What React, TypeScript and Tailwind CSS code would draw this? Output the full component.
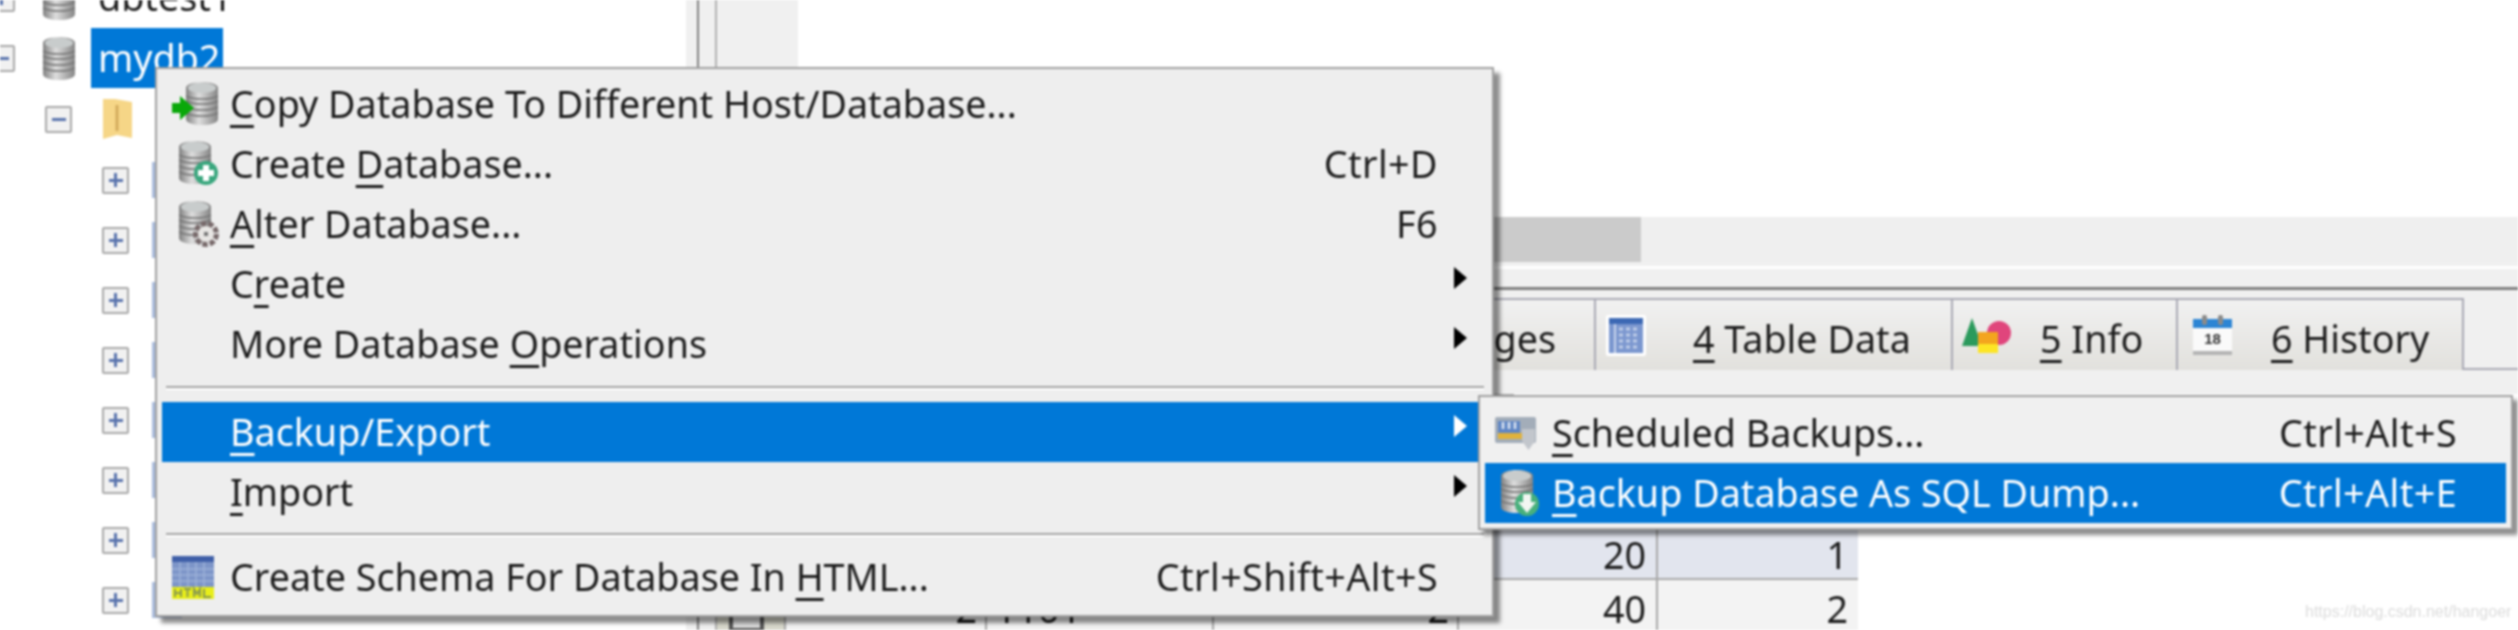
import { ReactNode } from "react";

type MenuEntry = {
  label: string;
  mnemonic: number;
  shortcut?: string;
  submenu?: boolean;
  active?: boolean;
  icon?: ReactNode;
};

// text with one underlined access key, windows menu style
function Label({ text, at }: { text: string; at: number }) {
  return (
    <span className="whitespace-pre">
      {text.slice(0, at)}
      <span className="underline decoration-[3px] underline-offset-[7px] [text-decoration-skip-ink:none]">{text[at]}</span>
      {text.slice(at + 1)}
    </span>
  );
}

function Cylinder({ id }: { id: string }) {
  return (
    <>
      <defs>
        <linearGradient id={id} x1="0" x2="1" y1="0" y2="0">
          <stop offset="0" stopColor="#808080" />
          <stop offset="0.4" stopColor="#dedede" />
          <stop offset="1" stopColor="#858585" />
        </linearGradient>
      </defs>
      <path d="M1 7C1 -1 33 -1 33 7V38C33 46 1 46 1 38Z" fill={`url(#${id})`} />
      <ellipse cx="17" cy="7" rx="14" ry="5" fill="#c8cccc" />
      <path d="M1 15C8 19 26 19 33 15M1 20C8 24 26 24 33 20M1 26C8 30 26 30 33 26M1 32C8 36 26 36 33 32" stroke="#777" strokeWidth="1.5" fill="none" />
    </>
  );
}

function DbIcon({ id, className }: { id: string; className?: string }) {
  return (
    <svg viewBox="0 0 34 45" className={className}>
      <Cylinder id={id} />
    </svg>
  );
}

function CopyDbIcon() {
  return (
    <svg viewBox="0 0 48 46" className="w-[48px] h-[46px]">
      <g transform="translate(13 0)">
        <Cylinder id="db-copy" />
      </g>
      <path d="M0 22H8V15L22 27L8 39V32H0Z" fill="#0aa80a" />
    </svg>
  );
}

function CreateDbIcon() {
  return (
    <svg viewBox="0 0 42 48" className="w-[42px] h-[48px]">
      <Cylinder id="db-create" />
      <circle cx="28" cy="33" r="12" fill="#3aa77e" />
      <path d="M28 25V41M20 33H36" stroke="#fff" strokeWidth="6" />
    </svg>
  );
}

function AlterDbIcon() {
  return (
    <svg viewBox="0 0 42 48" className="w-[42px] h-[48px]">
      <Cylinder id="db-alter" />
      <circle cx="28" cy="34" r="10" fill="none" stroke="#77696a" strokeWidth="6" strokeDasharray="5 2" />
      <circle cx="28" cy="34" r="8" fill="#e7e5e3" />
      <rect x="26" y="32" width="4" height="4" fill="#777" />
    </svg>
  );
}

function HtmlGridIcon() {
  return (
    <svg viewBox="0 0 42 43" className="w-[42px] h-[43px]">
      <rect width="42" height="43" fill="#7d95c8" />
      <rect width="42" height="6" fill="#3f5fa8" />
      <path d="M0 13H42M0 19H42M0 25H42M8 6V31M16 6V31M24 6V31M32 6V31" stroke="#9cb0d8" strokeWidth="1.5" />
      <rect y="31" width="42" height="12" fill="#e8ee1a" />
      <path d="M3 33V41M9 33V41M3 37H9M12 33H19M15.5 33V41M22 41V33L25 38L28 33V41M32 33V41H39" stroke="#8a9a50" strokeWidth="2" fill="none" />
    </svg>
  );
}

function ScheduleIcon() {
  return (
    <svg viewBox="0 0 41 33" className="w-[41px] h-[33px]">
      <rect width="41" height="26" rx="2" fill="#a3adb9" />
      <rect x="3" y="4" width="22" height="18" fill="#5f86c4" />
      <rect x="3" y="16" width="26" height="6" fill="#e0b23c" />
      <path d="M8 5V12M14 5V12M20 5V12" stroke="#dfe6f2" strokeWidth="2.5" />
      <path d="M27 12H40V24L33.5 33L27 24Z" fill="#c2c6cc" />
    </svg>
  );
}

function BackupDbIcon() {
  return (
    <svg viewBox="0 0 40 48" className="w-[40px] h-[48px]">
      <Cylinder id="db-backup" />
      <circle cx="27" cy="35" r="12" fill="#48b07c" />
      <path d="M23 25H31V33H36L27 44L18 33H23Z" fill="#f2f6f2" />
    </svg>
  );
}

function TableGridIcon() {
  return (
    <svg viewBox="0 0 40 41" className="w-[40px] h-[41px]">
      <rect width="40" height="41" rx="2" fill="#fff" />
      <rect x="3" y="3" width="34" height="35" fill="#7b97cf" />
      <rect x="3" y="3" width="34" height="6" fill="#3c68b4" />
      <path d="M9 9V38" stroke="#c8d4ec" strokeWidth="2" />
      <path d="M13 14H34M13 20H34M13 26H34M13 32H34" stroke="#c0cde8" strokeWidth="3" strokeDasharray="4 3" />
    </svg>
  );
}

function ShapesIcon() {
  return (
    <svg viewBox="0 0 49 35" className="w-[49px] h-[35px]">
      <path d="M10 0L20 28H0Z" fill="#2b9a5c" />
      <circle cx="37" cy="15" r="12" fill="#e0457c" />
      <rect x="16" y="14" width="20" height="12" fill="#f3a51e" />
      <rect x="16" y="26" width="20" height="9" fill="#fde525" />
    </svg>
  );
}

function CalendarIcon() {
  return (
    <svg viewBox="0 0 39 40" className="w-[39px] h-[40px]">
      <rect y="4" width="39" height="34" fill="#fafafa" />
      <rect y="4" width="39" height="9" fill="#2c85d4" />
      <rect x="9" width="5" height="10" rx="2" fill="#8a8a8a" />
      <rect x="25" width="5" height="10" rx="2" fill="#8a8a8a" />
      <rect y="36" width="39" height="4" fill="#b4b4b4" />
      <text x="19.5" y="29" textAnchor="middle" fontSize="15" fontWeight="700" fontFamily="Liberation Sans, sans-serif" fill="#333">18</text>
    </svg>
  );
}

const mainTop: MenuEntry[] = [
  { label: "Copy Database To Different Host/Database...", mnemonic: 0, icon: <div className="ml-[10px]"><CopyDbIcon /></div> },
  { label: "Create Database...", mnemonic: 7, shortcut: "Ctrl+D", icon: <div className="ml-[16px]"><CreateDbIcon /></div> },
  { label: "Alter Database...", mnemonic: 0, shortcut: "F6", icon: <div className="ml-[16px]"><AlterDbIcon /></div> },
  { label: "Create", mnemonic: 1, submenu: true },
  { label: "More Database Operations", mnemonic: 14, submenu: true },
];

const mainMiddle: MenuEntry[] = [
  { label: "Backup/Export", mnemonic: 0, submenu: true, active: true },
  { label: "Import", mnemonic: 0, submenu: true },
];

const mainBottom: MenuEntry[] = [
  { label: "Create Schema For Database In HTML...", mnemonic: 30, shortcut: "Ctrl+Shift+Alt+S", icon: <div className="ml-[10px]"><HtmlGridIcon /></div> },
];

const subItems: MenuEntry[] = [
  { label: "Scheduled Backups...", mnemonic: 0, shortcut: "Ctrl+Alt+S", icon: <div className="ml-[10px]"><ScheduleIcon /></div> },
  { label: "Backup Database As SQL Dump...", mnemonic: 0, shortcut: "Ctrl+Alt+E", active: true, icon: <div className="ml-[15px]"><BackupDbIcon /></div> },
];

function MenuRow({ item, slot }: { item: MenuEntry; slot: string }) {
  return (
    <div className={`flex items-center ${item.active ? "bg-[#0078d7] text-white" : ""} ${item.submenu ? "pr-[20px]" : "pr-[49px]"} h-[60px]`}>
      <div className={`${slot} shrink-0 flex items-center`}>{item.icon}</div>
      <Label text={item.label} at={item.mnemonic} />
      {item.shortcut && <span className="ml-auto tracking-[0.4px]">{item.shortcut}</span>}
      {item.submenu && (
        <span className={`ml-auto mb-[12px] w-0 h-0 border-y-[11px] border-y-transparent border-l-[13px] ${item.active ? "border-l-white" : "border-l-black"}`} />
      )}
    </div>
  );
}

function MenuSeparator({ height }: { height: string }) {
  return (
    <div className={`${height} flex flex-col justify-center pl-[4px] pr-[3px]`}>
      <div className="h-[2px] bg-[#a3a3a3]" />
      <div className="h-[2px] bg-white" />
    </div>
  );
}

function ExpanderBox({ open, className }: { open?: boolean; className?: string }) {
  return (
    <div className={`w-[27px] h-[27px] shrink-0 rounded-[2px] border-2 border-[#a8a8a8] bg-[#f1f1f1] flex items-center justify-center relative ${className ?? ""}`}>
      <div className="w-[14px] h-[3px] bg-[#5a74ad]" />
      {!open && <div className="absolute w-[3px] h-[14px] bg-[#5a74ad]" />}
    </div>
  );
}

function TreeRow({ children, height = "h-[60px]" }: { children: ReactNode; height?: string }) {
  return <div className={`${height} flex items-center shrink-0`}>{children}</div>;
}

function Tab({ label, at, icon, width, pad, gap }: { label: string; at: number; icon?: ReactNode; width: string; pad: string; gap: string }) {
  return (
    <div className={`${width} h-[70px] flex items-center border-l-2 border-l-[#a9a9b4] bg-gradient-to-b from-[#f1f1f1] to-[#e2e1dd] ${pad}`}>
      {icon}
      <div className={`${gap} pt-[8px]`}>
        <Label text={label} at={at} />
      </div>
    </div>
  );
}

function GridRow({ bg, height, cells }: { bg: string; height: string; cells: string[] }) {
  const widths = ["w-[201px] justify-end pr-[8px]", "w-[227px] pl-[8px]", "w-[245px] justify-end pr-[8px]", "w-[199px] justify-end pr-[10px]", "w-[202px] justify-end pr-[10px]"];
  return (
    <div className={`flex ${height} w-[1141px] border-b-2 border-b-[#a8a8a8]`}>
      <div className="w-[67px] shrink-0 bg-[#d9d9cd] pl-[12px] overflow-hidden">
        <div className="w-[35px] h-[60px] mt-[-8px] border-4 border-[#555] bg-[#dcdcdc]" />
      </div>
      {cells.map((cell, i) => (
        <div key={i} className={`${widths[i]} shrink-0 flex items-center pt-[6px] border-l-2 border-l-[#a8a8a8] ${bg}`}>
          {cell}
        </div>
      ))}
    </div>
  );
}

export default function App() {
  return (
    <div className="relative w-[2518px] h-[630px] overflow-hidden bg-white text-[#1c1c1c] font-['Noto_Sans',sans-serif] text-[37.7px] leading-none blur-[0.8px]">
      <div className="flex h-[630px]">
        {/* Object browser tree */}
        <div className="w-[686px] shrink-0 flex flex-col -mt-[32px] bg-white overflow-hidden">
          <TreeRow>
            <ExpanderBox className="-ml-[12px]" />
            <DbIcon id="db-tree-1" className="w-[34px] h-[45px] ml-[27px]" />
            <span className="ml-[22px] -mt-[3px]">dbtest1</span>
          </TreeRow>
          <TreeRow>
            <ExpanderBox open className="-ml-[12px]" />
            <DbIcon id="db-tree-2" className="w-[34px] h-[45px] ml-[27px]" />
            <span className="ml-[15px] pl-[7px] w-[132px] h-[60px] flex items-center bg-[#0078d7] text-white">mydb2</span>
          </TreeRow>
          <TreeRow height="h-[62px]">
            <ExpanderBox open className="ml-[45px]" />
            <svg viewBox="0 0 29 40" className="w-[29px] h-[40px] ml-[31px]">
              <path d="M0 0H12L29 3V39L14 36L0 40Z" fill="#f6d687" />
              <path d="M14 6V32" stroke="#d4ac5c" strokeWidth="3" />
            </svg>
          </TreeRow>
          {[0, 1, 2, 3, 4, 5, 6, 7].map((i) => (
            <TreeRow key={i}>
              <ExpanderBox className="ml-[102px]" />
              <div className="ml-[23px] w-[30px] h-[36px] bg-[#a9bbdc]" />
            </TreeRow>
          ))}
        </div>

        {/* Splitter */}
        <div className="w-[11px] shrink-0 bg-[#f0f0f0]" />
        <div className="w-[2px] shrink-0 bg-[#808080]" />
        <div className="w-[16px] shrink-0 bg-[#f0f0f0]" />

        <div className="flex-1 flex flex-col min-w-0 border-l-2 border-l-[#b0b0b0]">
          {/* Query editor */}
          <div className="flex h-[217px] shrink-0">
            <div className="w-[81px] shrink-0 bg-[#f0f0f0]" />
            <div className="flex-1 bg-white" />
          </div>
          {/* Horizontal scrollbar */}
          <div className="flex h-[45px] shrink-0 bg-[#efefef]">
            <div className="w-[924px] bg-[#cbcbcb]" />
          </div>
          <div className="h-[4px] shrink-0 bg-[#f0f0f0]" />
          <div className="h-[3px] shrink-0 bg-white" />
          <div className="h-[18px] shrink-0 bg-[#f0f0f0]" />
          <div className="h-[3px] shrink-0 bg-[#7f7f7f]" />
          <div className="h-[8px] shrink-0 bg-[#f0f0f0]" />

          {/* Result tabs */}
          <div className="flex h-[72px] shrink-0 bg-[#f0f0f0] border-b-2 border-b-[#a9a9b4]">
            <div className="flex border-t-2 border-t-[#a9a9b4] border-r-2 border-r-[#a9a9b4] h-[70px]">
              <Tab label="3 Messages" at={0} width="w-[877px]" pad="justify-end pr-[38px]" gap="" />
              <Tab label="4 Table Data" at={0} width="w-[357px]" pad="pl-[10px]" gap="ml-[47px]" icon={<TableGridIcon />} />
              <Tab label="5 Info" at={0} width="w-[225px]" pad="pl-[9px]" gap="ml-[29px]" icon={<ShapesIcon />} />
              <Tab label="6 History" at={0} width="w-[286px]" pad="pl-[15px]" gap="ml-[39px]" icon={<CalendarIcon />} />
            </div>
          </div>

          {/* Result grid */}
          <div className="h-[24px] shrink-0 bg-[#f0f0f0]" />
          <div className="flex-1 flex flex-col bg-white overflow-hidden">
            <div className="h-[2px] w-[797px] shrink-0 bg-[#a8a8a8]" />
            <div className="h-[130px] w-[1141px] shrink-0 bg-[#f0f0f0]" />
            <GridRow bg="bg-[#e2e5ee]" height="h-[60px]" cells={["", "", "", "20", "1"]} />
            <GridRow bg="bg-[#f3f3f3]" height="h-[60px]" cells={["2", "1101", "2", "40", "2"]} />
          </div>
        </div>
      </div>

      {/* Context menu */}
      <div className="absolute left-[155px] top-[67px] w-[1339px] h-[550px] border-2 border-[#a0a0a0] bg-[#eeeeee] px-[5px] pt-[5px] shadow-[6px_6px_4px_rgba(0,0,0,0.45)]">
        {mainTop.map((item) => (
          <MenuRow key={item.label} item={item} slot="w-[68px]" />
        ))}
        <MenuSeparator height="h-[28px]" />
        {mainMiddle.map((item) => (
          <MenuRow key={item.label} item={item} slot="w-[68px]" />
        ))}
        <MenuSeparator height="h-[25px]" />
        {mainBottom.map((item) => (
          <MenuRow key={item.label} item={item} slot="w-[68px]" />
        ))}
      </div>

      {/* Backup/Export submenu */}
      <div className="absolute left-[1478px] top-[395px] w-[1035px] h-[135px] border-2 border-[#a0a0a0] bg-[#f0f0f0] px-[5px] pt-[6px] shadow-[5px_5px_4px_rgba(0,0,0,0.45)]">
        {subItems.map((item) => (
          <MenuRow key={item.label} item={item} slot="w-[67px]" />
        ))}
      </div>

      <div className="absolute left-[2305px] top-[604px] font-['Liberation_Sans',sans-serif] text-[16px] text-[#dcdcdc] whitespace-nowrap">
        https://blog.csdn.net/hangoer
      </div>
    </div>
  );
}
